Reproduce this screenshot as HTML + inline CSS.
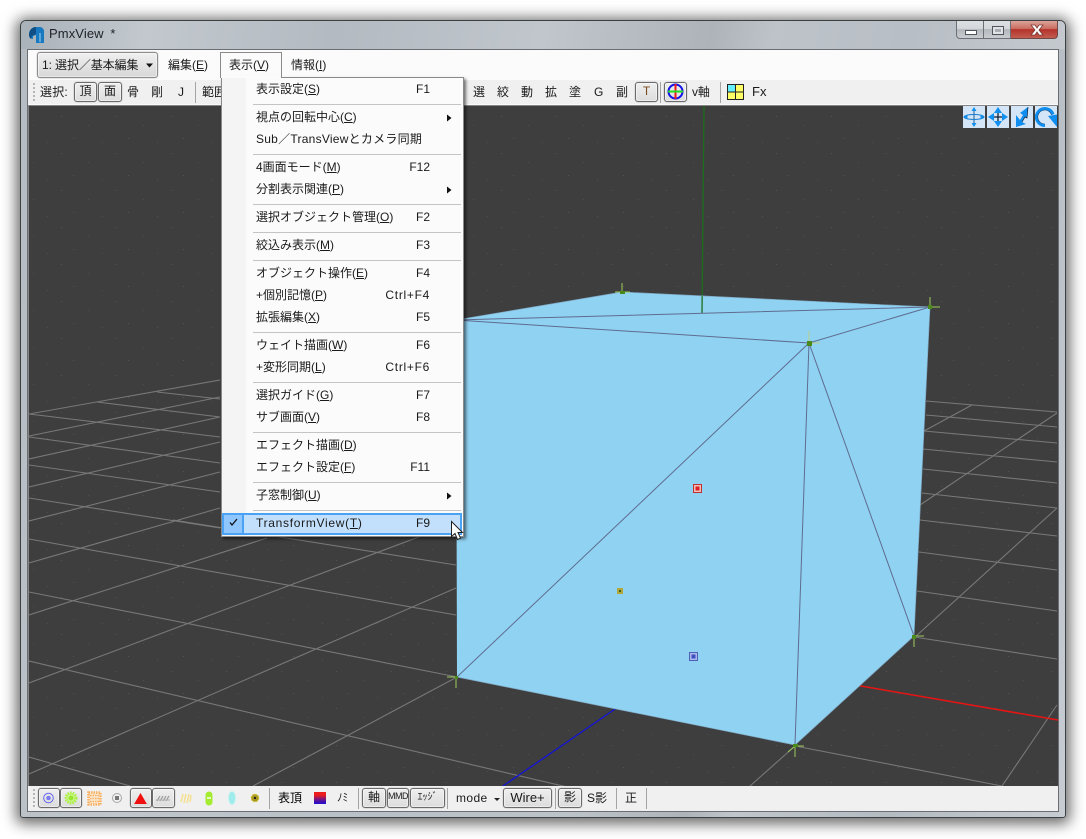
<!DOCTYPE html>
<html lang="ja"><head><meta charset="utf-8"><title>PmxView</title>
<style>
html,body{margin:0;padding:0;width:1086px;height:839px;overflow:hidden;background:#fff}
body{position:relative;font:12px/16px "Liberation Sans","Noto Sans CJK JP",sans-serif;color:#1a1a1a}
div,span.t,svg{position:absolute}
svg{left:0;top:0}
.t{position:absolute;white-space:nowrap;font:12px/16px "Liberation Sans","Noto Sans CJK JP",sans-serif}
.m{margin-top:1px}
.s{position:absolute;left:370px;width:60px;margin-top:1px;text-align:right;white-space:nowrap}
.b{position:absolute;box-sizing:border-box;border:1px solid #6b6b6b;border-radius:3px;background:linear-gradient(#efefef,#dcdcdc);box-shadow:inset 0 0 0 1px rgba(255,255,255,.45),0 0 0 .5px rgba(0,0,0,.15);text-align:center;white-space:nowrap;line-height:17px}
.sep{position:absolute;width:1px;background:#a4a4a4}
.ms{position:absolute;left:253px;width:208px;height:1px;background:#c4c4c4}
u{text-decoration:underline}
</style></head><body>

<!-- window -->
<div style="left:20px;top:20px;width:1046px;height:798px;box-sizing:border-box;border:1px solid #3b4043;border-radius:6px 6px 3px 3px;background:linear-gradient(100deg,#b4bbc2 0%,#c0c6cc 20%,#b9c0c7 40%,#bcc3c9 58%,#aeb4ba 68%,#c0c6cc 72%,#b4bbc2 85%,#c6ccd1 100%);box-shadow:0 2px 14px 4px rgba(0,0,0,.58)"></div>
<div style="left:21px;top:21px;width:1044px;height:28px;border-radius:5px 5px 0 0;background:linear-gradient(100deg,#a9b1b9 0%,#c2c8ce 12%,#b3bac1 30%,#c0c6cc 50%,#adb3b9 66%,#bdc3c9 72%,#b8bec5 85%,#c4c9ce 100%)"></div>

<!-- title -->
<svg width="60" height="50" style="left:0;top:0">
<path d="M29 35c0-5 3-8 8-8h3c2 0 4 2 4 4v12h-8v-8l-3 1v3c-2 0-4-2-4-4z" fill="#1878c0"/>
<path d="M29 35c0-5 3-8 7-8v7l-4 2-1 3c-1-1-2-2-2-4z" fill="#0f4f86"/>
<path d="M40 33v9" stroke="#a8d8f4" stroke-width="1"/>
</svg>
<span class="t" style="left:49px;top:26px;font-size:13px;color:#202428;letter-spacing:.1px">PmxView <span style="margin-left:3px">*</span></span>

<!-- caption buttons -->
<div style="left:956px;top:21px;width:28px;height:18px;box-sizing:border-box;border:1px solid #6a7076;border-top:0;border-radius:0 0 0 4px;background:linear-gradient(#dde0e3 0,#d4d8db 45%,#b3b8bd 50%,#c9cdd0 100%)"></div>
<div style="left:984px;top:21px;width:27px;height:18px;box-sizing:border-box;border:1px solid #6a7076;border-top:0;border-left:0;background:linear-gradient(#dde0e3 0,#d4d8db 45%,#b3b8bd 50%,#c9cdd0 100%)"></div>
<div style="left:1011px;top:21px;width:47px;height:18px;box-sizing:border-box;border:1px solid #6d4a48;border-top:0;border-left:0;border-radius:0 0 4px 0;background:linear-gradient(#dca398 0,#cc6e62 45%,#b3322a 50%,#c35c50 100%)"></div>
<svg width="1086" height="50">
<rect x="965.500" y="30.500" width="11" height="4" fill="#fff" stroke="#50565c"/>
<rect x="992.500" y="26.500" width="11" height="8" fill="#dfe3e6" stroke="#50565c"/><rect x="995" y="29" width="6" height="3" fill="#a9aeb3"/>
<path d="M1031 25h4l2 3 2-3h4l-4 5 4 5h-4l-2-3-2 3h-4l4-5z" fill="#fff" stroke="#7a3a34" stroke-width=".8"/>
</svg>

<!-- client -->
<div style="left:27px;top:49px;width:1032px;height:763px;box-sizing:border-box;border:1px solid #6a6e72;background:#f0f0f0"></div>
<div style="left:28px;top:50px;width:1030px;height:30px;background:#fbfbfb"></div>

<!-- viewport -->
<svg width="1086" height="839">
<defs>
<clipPath id="vp"><rect x="29" y="106" width="1029" height="680"/></clipPath>
<pattern id="dots" width="55" height="37" patternUnits="userSpaceOnUse">
<rect x="6" y="5" width="1" height="1" fill="#535353"/><rect x="33" y="14" width="1" height="1" fill="#4e4e4e"/><rect x="18" y="27" width="1" height="1" fill="#535353"/><rect x="47" y="31" width="1" height="1" fill="#4e4e4e"/>
</pattern>
</defs>
<rect x="28" y="105" width="1030" height="681" fill="#858585"/>
<g clip-path="url(#vp)">
<rect x="29" y="106" width="1029" height="680" fill="#3e3e3e"/>
<rect x="29" y="106" width="1029" height="680" fill="url(#dots)"/>
<g stroke="#787878" stroke-width="1.100" fill="none">
<path d="M29 414L220 380M29 436L220 397M29 459L220 417M29 487L220 442M29 521L220 472M29 563L220 508M29 615L267 538M29 683L456 523M29 774L456 588M253 786L457 677"/>
<path d="M97 402L220 417M157 392L220 399M29 414L220 437M29 437L220 463M29 465L220 492M29 498L220 528M29 539L456 615M29 592L457 677M29 661L580 790M29 757L130 786M173 520L456 565"/>
<path d="M926 401L1057 412M926 415L1057 427M924 431L1057 443M923 449L1057 462M923 469L1057 483M922 493L1057 508M920 520L1057 536M919 552L1057 570M917 591L1057 611M914 637L1057 659M795 746L1002 786"/>
<path d="M924 431L972 405M920 505L1057 413M915 637L1057 508M1002 786L1057 705M750 786L795 746"/>
</g>
<path d="M618 707L503 786" stroke="#1414d8" stroke-width="1.300"/>
<path d="M855 685L1058 720" stroke="#e81414" stroke-width="1.500"/>
<!-- cube -->
<path d="M456 320L622 292L930 307L914 636L795 745L457 677Z" fill="#90d2f2"/>
<path d="M704 106L702 313" stroke="#1c6e1c" stroke-width="1.300"/>
<g stroke="#5f6c90" stroke-width="1" fill="none">
<path d="M456 320L809 343L930 307M456 320L930 307M809 343L457 677M809 343L795 745M809 343L914 636"/>
</g>
<path d="M456 320L622 292M622 292L930 307M930 307L914 636L795 745L457 677" stroke="#7fa8c4" stroke-width=".7" fill="none"/>
<!-- vertex markers -->
<g stroke="#9ccc5a" stroke-width="1" fill="none">
<path d="M622 283V293M615 292H630"/>
<path d="M930 297V307M930 307H940"/>
<path d="M809 331V343M809 343H820" stroke="#b8cf88"/>
<path d="M914 636V647M914 636H924"/>
<path d="M795 746V757M795 746H804M795 746L788 752"/>
<path d="M456 677V688M456 677H447"/>
</g>
<g fill="#4a8a1a">
<rect x="620" y="291" width="5" height="3"/><rect x="928" y="305" width="4" height="4"/><rect x="807" y="341" width="5" height="5"/><rect x="912" y="635" width="4" height="4"/><rect x="793" y="744" width="5" height="3"/><rect x="455" y="676" width="3" height="3"/>
</g>
<rect x="693.500" y="484.500" width="8" height="8" fill="#f0c0b8" stroke="#c03030"/><rect x="695.500" y="486.500" width="4" height="4" fill="#e02020"/>
<rect x="617" y="588" width="6" height="6" fill="#b0a83c"/><rect x="619" y="590" width="2" height="2" fill="#40601c"/>
<rect x="689.500" y="652.500" width="8" height="8" fill="#a8b8e8" stroke="#5060b8"/><rect x="691.500" y="654.500" width="4" height="4" fill="#4050c0"/>
</g>

<!-- viewport gizmos -->
<g>
<rect x="963" y="106" width="22" height="22" fill="#d3e5f6"/><rect x="987" y="106" width="22" height="22" fill="#d3e5f6"/><rect x="1011" y="106" width="22" height="22" fill="#d3e5f6"/><rect x="1035" y="106" width="22" height="22" fill="#d3e5f6"/>
<path d="M974 108V126" stroke="#1a5f9a"/><ellipse cx="974" cy="117" rx="10" ry="2.500" fill="none" stroke="#1a7cd0" stroke-width="1"/>
<path d="M974 107l-2.500 4h5zM974 127l-2.500-4h5zM964 117l3.500-2.500v5zM984 117l-3.500-2.500v5z" fill="#1090f0"/>
<path d="M998 109V125M990 117H1006" stroke="#123" stroke-width="1.300"/>
<path d="M998 107l-4 6h8zM998 127l-4-6h8zM988 117l6-4v8zM1008 117l-6-4v8z" fill="#1090f0"/>
<path d="M1028 107L1020 113L1023 115L1020 120L1016 115L1016 127L1026 124L1022 122L1025 117L1027 118Z" fill="#0f8ef0"/>
<path d="M1028 107L1027 118L1025 117L1022 122" fill="none" stroke="#123" stroke-width=".7"/>
<path d="M1045 125.500a8.500 8.500 0 1 1 8-11" fill="none" stroke="#0f8ef0" stroke-width="3"/>
<path d="M1048 116L1057 114.500L1057 127Z" fill="#0f8ef0"/>
<path d="M1045 124a7 7 0 1 1 6.500-9" fill="none" stroke="#104a80" stroke-width=".6"/>
</g>
</svg>

<!-- top toolbar -->
<div style="left:28px;top:80px;width:1030px;height:25px;background:#f0f0f0;border-bottom:1px solid #fafafa;box-sizing:border-box"></div>
<svg width="40" height="106"><g fill="#b5b5b5"><rect x="33" y="83" width="2" height="2"/><rect x="33" y="87" width="2" height="2"/><rect x="33" y="91" width="2" height="2"/><rect x="33" y="95" width="2" height="2"/><rect x="33" y="99" width="2" height="2"/></g></svg>
<span class="t" style="left:40px;top:84px;letter-spacing:.2px">選択:</span>
<div class="b" style="left:74px;top:82px;width:23px;height:20px">頂</div>
<div class="b" style="left:98px;top:82px;width:24px;height:20px">面</div>
<span class="t" style="left:127px;top:84px">骨</span>
<span class="t" style="left:151px;top:84px">剛</span>
<span class="t" style="left:178px;top:84px">J</span>
<div class="sep" style="left:195px;top:82px;height:21px"></div>
<span class="t" style="left:202px;top:84px">範囲</span>
<span class="t" style="left:473px;top:84px">選</span>
<span class="t" style="left:497px;top:84px">絞</span>
<span class="t" style="left:521px;top:84px">動</span>
<span class="t" style="left:545px;top:84px">拡</span>
<span class="t" style="left:569px;top:84px">塗</span>
<span class="t" style="left:594px;top:84px">G</span>
<span class="t" style="left:616px;top:84px">副</span>
<div class="b" style="left:635px;top:82px;width:23px;height:20px;color:#7a4a20">T</div>
<div class="sep" style="left:660px;top:82px;height:21px"></div>
<div class="b" style="left:664px;top:82px;width:23px;height:20px"></div>
<svg width="1086" height="110">
<circle cx="675.500" cy="91.500" r="7" fill="none" stroke="#1010e8" stroke-width="2"/>
<path d="M675.500 84V99" stroke="#f01818" stroke-width="2"/><path d="M668 91.500H683" stroke="#20e020" stroke-width="2"/>
<rect x="727.500" y="84.500" width="16" height="15" fill="#ffff66" stroke="#222"/><rect x="728" y="85" width="7.500" height="7" fill="#66f0ff"/><path d="M735.500 84V100M727 92H744" stroke="#222"/>
</svg>
<span class="t" style="left:692px;top:84px;letter-spacing:-.1px">v軸</span>
<div class="sep" style="left:720px;top:82px;height:21px"></div>
<span class="t" style="left:752px;top:84px;font-size:13px">Fx</span>

<!-- menu bar -->
<div class="b" style="left:37px;top:52px;width:121px;height:26px;background:linear-gradient(#f0f0f0,#d8d8d8);border-color:#8c8c8c"></div>
<span class="t" style="left:42px;top:57px;letter-spacing:-.1px">1: 選択／基本編集</span>
<svg width="160" height="80"><path d="M146 63.500h7l-3.500 4z" fill="#111"/></svg>
<span class="t" style="left:168px;top:57px">編集(<u>E</u>)</span>
<div style="left:220px;top:52px;width:62px;height:26px;box-sizing:border-box;border:1px solid #8a8a8a;border-bottom:0;background:#fbfbfb"></div>
<span class="t" style="left:229px;top:57px">表示(<u>V</u>)</span>
<span class="t" style="left:291px;top:57px">情報(<u>I</u>)</span>

<!-- bottom toolbar -->
<div style="left:28px;top:786px;width:1030px;height:25px;background:#f0f0f0"></div>
<div class="b" style="left:38px;top:788px;width:22px;height:20px"></div>
<div class="b" style="left:60px;top:788px;width:22px;height:20px"></div>
<div class="b" style="left:130px;top:788px;width:22px;height:20px"></div>
<div class="b" style="left:152px;top:788px;width:23px;height:20px"></div>
<svg width="1086" height="839">
<g fill="#b5b5b5"><rect x="33" y="789" width="2" height="2"/><rect x="33" y="793" width="2" height="2"/><rect x="33" y="797" width="2" height="2"/><rect x="33" y="801" width="2" height="2"/><rect x="33" y="805" width="2" height="2"/></g>
<circle cx="48.500" cy="798" r="4.800" fill="none" stroke="#6a6aee"/><circle cx="48.500" cy="798" r="2.300" fill="#7d7df0"/>
<circle cx="71" cy="798" r="5" fill="#d0f490" stroke="#a8f040" stroke-width="3" stroke-dasharray="1.500 1"/><circle cx="71" cy="798" r="2.500" fill="#98e830"/>
<rect x="88.500" y="792.500" width="12" height="12" fill="#fbe4c8" stroke="#f8b060" stroke-width="2.500" stroke-dasharray="1.500 1"/><path d="M90 798.500h9M90 795.500h9M90 801.500h9" stroke="#f8b060" stroke-width="1.200" stroke-dasharray="1.500 1"/>
<circle cx="117" cy="798" r="4.500" fill="none" stroke="#a8a8a8"/><rect x="115" y="796" width="4" height="4" fill="#777"/>
<path d="M135 803.500l5.500-9.500 5.500 9.500z" fill="#f01010" stroke="#f01010"/>
<path d="M157 801l3-5M160 801l3-5M163 801l3-5M166 801l3-5" stroke="#9a9a9a" stroke-width="1.200"/><path d="M156 800h14" stroke="#b0b0b0"/>
<path d="M181 802l2-8M184 803l2-9M187 803l2-9M190 802l1-7" stroke="#f4e090" stroke-width="1.500"/>
<rect x="205.500" y="791.500" width="7" height="14" rx="3.500" fill="#a4ec30"/><rect x="207" y="797" width="4" height="2" fill="#e8f8c0"/>
<ellipse cx="232" cy="798" rx="3.500" ry="6.500" fill="#a0ecec" stroke="#c4f4f4" stroke-dasharray="1.500 1"/>
<circle cx="255" cy="798" r="3.800" fill="#a89820" stroke="#d4c436" stroke-dasharray="2 1"/><rect x="254" y="797" width="2" height="2" fill="#222"/>
<defs><linearGradient id="sw" x1="0" y1="0" x2="0" y2="1"><stop offset=".25" stop-color="#ee1c1c"/><stop offset=".85" stop-color="#3010c0"/></linearGradient></defs>
<rect x="314" y="792" width="12" height="12" fill="url(#sw)"/>
</svg>
<div class="sep" style="left:269px;top:788px;height:21px"></div>
<span class="t" style="left:278px;top:790px;color:#000">表頂</span>
<span class="t" style="left:337px;top:790px;font-size:11px">ﾉﾐ</span>
<div class="sep" style="left:358px;top:788px;height:21px"></div>
<div class="b" style="left:362px;top:788px;width:24px;height:20px">軸</div>
<div class="b" style="left:387px;top:788px;width:22px;height:20px;font-size:9px;letter-spacing:-.5px;line-height:15px">MMD</div>
<div class="b" style="left:410px;top:788px;width:35px;height:20px;font-size:10px">ｴｯｼﾞ</div>
<div class="sep" style="left:447px;top:788px;height:21px"></div>
<span class="t" style="left:456px;top:790px;letter-spacing:.4px">mode</span>
<svg width="510" height="839"><path d="M494 798h6l-3 3z" fill="#222"/></svg>
<div class="b" style="left:503px;top:788px;width:49px;height:20px;font-size:13px;line-height:17px">Wire+</div>
<div class="sep" style="left:555px;top:788px;height:21px"></div>
<div class="b" style="left:558px;top:788px;width:24px;height:20px">影</div>
<span class="t" style="left:587px;top:790px">S影</span>
<div class="sep" style="left:616px;top:788px;height:21px"></div>
<span class="t" style="left:625px;top:790px">正</span>
<div class="sep" style="left:646px;top:788px;height:21px"></div>

<!-- popup menu -->
<div style="left:221px;top:77px;width:243px;height:460px;box-sizing:border-box;border:1px solid #8a8a8a;background:linear-gradient(90deg,#f4f4f4 0,#f4f4f4 24px,#fbfbfb 24px);box-shadow:2px 2px 3px rgba(0,0,0,.55)"></div>
<div style="left:221px;top:76px;width:60px;height:2px;background:#fbfbfb"></div>

<div class="ms" style="top:104px"></div><div class="ms" style="top:154px"></div><div class="ms" style="top:204px"></div><div class="ms" style="top:232px"></div><div class="ms" style="top:260px"></div><div class="ms" style="top:332px"></div><div class="ms" style="top:382px"></div><div class="ms" style="top:432px"></div><div class="ms" style="top:482px"></div><div class="ms" style="top:510px"></div>

<div style="left:222px;top:513px;width:240px;height:22px;box-sizing:border-box;border:2px solid #4aa2f5;background:#c2dffb"></div>
<div style="left:222px;top:513px;width:22px;height:22px;box-sizing:border-box;border:2px solid #4aa2f5;background:#8fc6fe"></div>

<span class="t m" style="left:256px;top:80px">表示設定(<u>S</u>)</span><span class="s" style="top:80px">F1</span>
<span class="t m" style="left:256px;top:108px">視点の回転中心(<u>C</u>)</span>
<span class="t m" style="left:256px;top:130px;letter-spacing:.25px">Sub／TransViewとカメラ同期</span>
<span class="t m" style="left:256px;top:158px">4画面モード(<u>M</u>)</span><span class="s" style="top:158px">F12</span>
<span class="t m" style="left:256px;top:180px">分割表示関連(<u>P</u>)</span>
<span class="t m" style="left:256px;top:208px">選択オブジェクト管理(<u>O</u>)</span><span class="s" style="top:208px">F2</span>
<span class="t m" style="left:256px;top:236px">絞込み表示(<u>M</u>)</span><span class="s" style="top:236px">F3</span>
<span class="t m" style="left:256px;top:264px">オブジェクト操作(<u>E</u>)</span><span class="s" style="top:264px">F4</span>
<span class="t m" style="left:256px;top:286px">+個別記憶(<u>P</u>)</span><span class="s" style="top:286px;letter-spacing:.7px">Ctrl+F4</span>
<span class="t m" style="left:256px;top:308px">拡張編集(<u>X</u>)</span><span class="s" style="top:308px">F5</span>
<span class="t m" style="left:256px;top:336px">ウェイト描画(<u>W</u>)</span><span class="s" style="top:336px">F6</span>
<span class="t m" style="left:256px;top:358px">+変形同期(<u>L</u>)</span><span class="s" style="top:358px;letter-spacing:.7px">Ctrl+F6</span>
<span class="t m" style="left:256px;top:386px">選択ガイド(<u>G</u>)</span><span class="s" style="top:386px">F7</span>
<span class="t m" style="left:256px;top:408px">サブ画面(<u>V</u>)</span><span class="s" style="top:408px">F8</span>
<span class="t m" style="left:256px;top:436px">エフェクト描画(<u>D</u>)</span>
<span class="t m" style="left:256px;top:458px">エフェクト設定(<u>F</u>)</span><span class="s" style="top:458px">F11</span>
<span class="t m" style="left:256px;top:486px">子窓制御(<u>U</u>)</span>
<span class="t m" style="left:256px;top:514px;letter-spacing:.7px">TransformView(<u>T</u>)</span><span class="s" style="top:514px">F9</span>

<svg width="1086" height="839">
<path d="M447 114.500l4.500 3.500-4.500 3.500zM447 186.500l4.500 3.500-4.500 3.500zM447 492.500l4.500 3.500-4.500 3.500z" fill="#111"/>
<path d="M230 522.500l2 2.500 5-6" fill="none" stroke="#111" stroke-width="1.300"/>
<path d="M451.500 521.500v15l3.500-3 2.500 6 3-1.300-2.500-5.700h4.500z" fill="#fff" stroke="#222" stroke-width="1"/>
</svg>
</body></html>
